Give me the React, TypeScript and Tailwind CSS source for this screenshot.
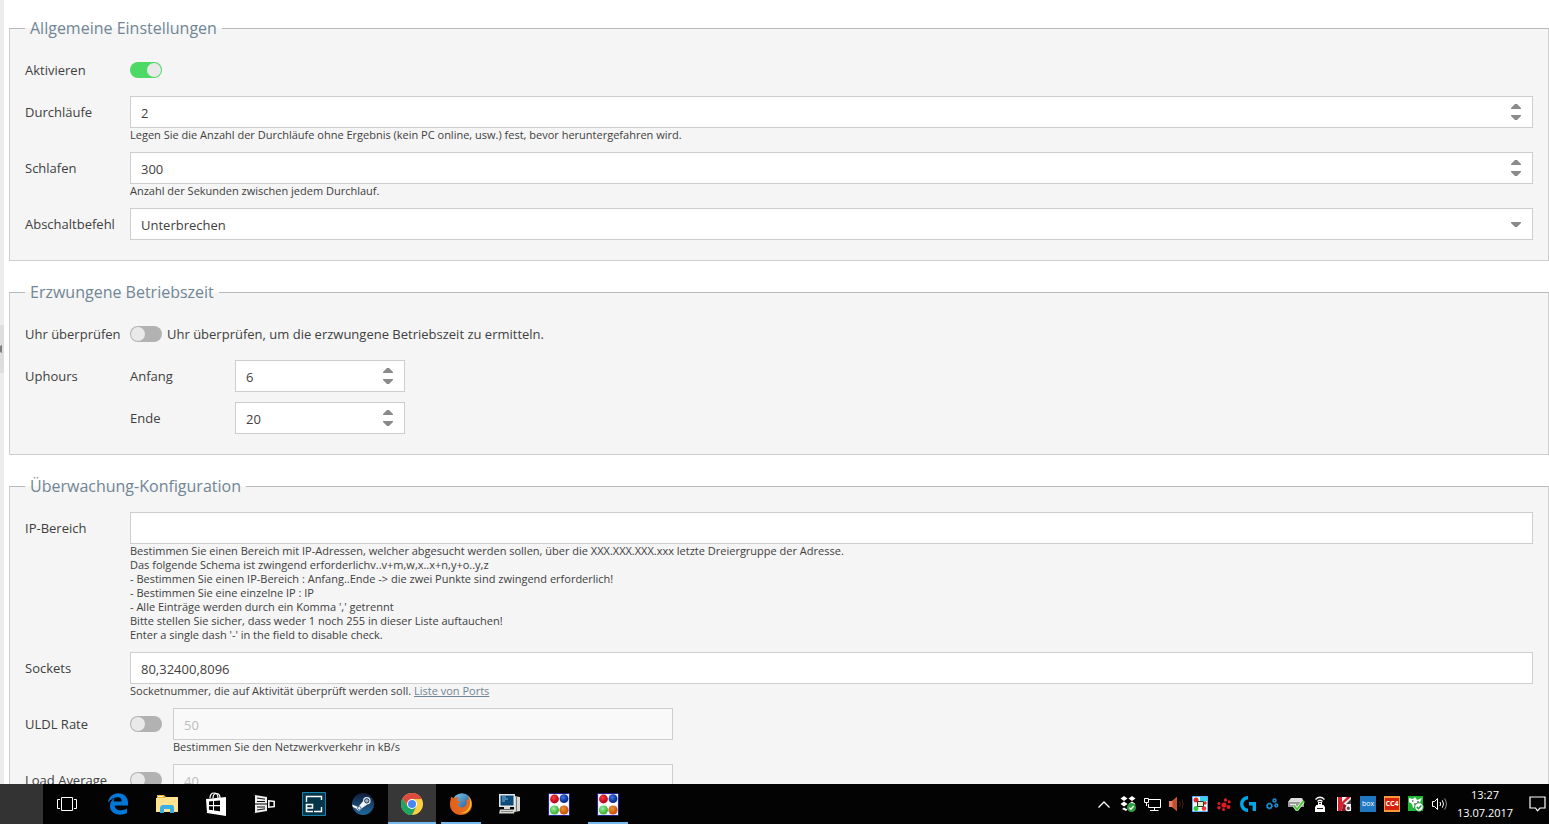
import { ReactNode, useState } from "react";

function classNames(...classes: any) {
    return classes.filter(Boolean).join(" ");
}

const UpArrow = () => (
    <svg width="10" height="5" viewBox="0 0 10 5" fill="#8a8a8a">
        <path d="M4 0h2l4 4v1H0V4z" />
    </svg>
);

const DownArrow = () => (
    <svg width="10" height="5" viewBox="0 0 10 5" fill="#8a8a8a">
        <path d="M0 0h10v1L6 5H4L0 1z" />
    </svg>
);

const Section = ({ title, children }: { title: string; children: ReactNode }) => (
    <fieldset className="min-w-0 border border-[#cecece] border-t-[#b9b9b9] bg-[#f5f5f5] px-[15px] pb-5">
        <legend className="px-[5px] text-base leading-[22px] text-[#708696]">{title}</legend>
        <div className="flex flex-col gap-2.5 pt-[15px]">{children}</div>
    </fieldset>
);

const Row = ({ label, htmlFor, children }: { label: string; htmlFor?: string; children: ReactNode }) => (
    <div className="flex items-start">
        <label htmlFor={htmlFor} className="w-[105px] shrink-0 leading-8 whitespace-nowrap">
            {label}
        </label>
        <div className="min-w-0 flex-1">{children}</div>
    </div>
);

const Help = ({ children }: { children: ReactNode }) => (
    <p className="text-[11px] leading-[14px]">{children}</p>
);

const Toggle = ({ id, defaultChecked }: { id: string; defaultChecked?: boolean }) => (
    <input
        type="checkbox"
        id={id}
        defaultChecked={defaultChecked}
        className="flex h-4 w-8 shrink-0 appearance-none items-center rounded-full bg-[#b2b2b2] px-px before:size-3.5 before:rounded-full before:bg-[#e9e9e9] checked:justify-end checked:bg-[#4cd964]"
    />
);

const TextField = ({ id, defaultValue, disabled }: { id: string; defaultValue?: string; disabled?: boolean }) => (
    <input
        type="text"
        id={id}
        defaultValue={defaultValue}
        disabled={disabled}
        className="block h-8 w-full border border-[#cecece] bg-white px-2.5 pt-0.5 disabled:bg-[#f9f9f9] disabled:text-[#bcbcbc]"
    />
);

const NumberField = ({ id, initial }: { id: string; initial: number }) => {
    const [value, setValue] = useState(initial);

    return (
        <div className="flex h-8 w-full border border-[#cecece] bg-white">
            <input
                type="number"
                id={id}
                value={value}
                onChange={(e) => setValue(Number(e.target.value))}
                className="min-w-0 flex-1 appearance-none px-2.5 pt-[3px] [-moz-appearance:textfield] [&::-webkit-inner-spin-button]:appearance-none"
            />
            <div className="flex w-8 flex-col items-center justify-center gap-1.5">
                <button type="button" aria-label="Mehr" onClick={() => setValue(value + 1)}>
                    <UpArrow />
                </button>
                <button type="button" aria-label="Weniger" onClick={() => setValue(value - 1)}>
                    <DownArrow />
                </button>
            </div>
        </div>
    );
};

/* ---------- taskbar icons ---------- */

const TaskView = () => (
    <svg width="20" height="16" viewBox="0 0 20 16" fill="none" stroke="#fff">
        <path d="M4.500 1.500h11v13h-11zM3 3.500H.5v9H3M17 3.500h2.500v9H17" />
    </svg>
);

const Edge = () => (
    <svg width="20" height="22" viewBox="0 0 20 22" fill="#0078d7">
        <path d="M0 9.800C.8 3.800 4.800.3 10.300.3c6 0 9.700 4 9.700 9.800v2.300H6.700c.2 3.300 3 4.800 6.300 4.800 2.200 0 4.200-.6 6-1.700v4.600c-2 1.100-4.300 1.600-7 1.600-6 0-10-3.300-10-8.700 0-3.400 1.700-6.200 4.600-7.700-.5.800-1 1.900-1 3.200h8.200c0-2.700-1.400-4.200-4.300-4.200C5.800 4.300 2.300 6.400 0 9.800z" />
    </svg>
);

const Explorer = () => (
    <svg width="22" height="18" viewBox="0 0 22 18">
        <path d="M1 0h7l2 2h11v4H1z" fill="#f0b429" />
        <path d="M2 1h5v1H2z" fill="#fff" />
        <path d="M0 3h9l1-1h12v15H0z" fill="#ffe391" />
        <path d="M4 18v-6l2-2h11l1 2v6h-4v-4H8v4z" fill="#35b1e5" />
    </svg>
);

const Store = () => (
    <svg width="22" height="24" viewBox="0 0 22 24">
        <path d="M5 6c0-3 1.500-5 4-5s4 2 4 5M8 6c0-3 1.500-4.500 3.500-4.500S15 3 15 6" fill="none" stroke="#fff" strokeWidth="1.200" />
        <path d="M1 7l20-2v19L2 21z" fill="#fff" />
        <path d="M4 9.500l4-.4v4H4zM9 9l6-.6v4.700H9zM4 14.200h4v4l-4-.5zM9 14.200h6v5l-6-.8z" fill="#000" />
    </svg>
);

const Remote = () => (
    <svg width="20" height="18" viewBox="0 0 20 18">
        <path d="M0 0l12 2v6.500H0zM0 9.500h12V16L0 18z" fill="#eee" />
        <path d="M2 3l8 1.200M2 6.500h8M2 12h8M2 15l8-1.200" stroke="#111" strokeWidth="1" />
        <path d="M13.800 5.800l5.400.7v5l-5.400.7z" fill="#000" stroke="#eee" strokeWidth="1.600" />
    </svg>
);

const Elaborate = () => (
    <svg width="24" height="24" viewBox="0 0 24 24" fill="none">
        <path d="M.5.500h23v23H.5z" fill="#053549" stroke="#1583ad" />
        <path d="M4.500 10V4.500h15V8M12 19.500h7.500V15" stroke="#fff" strokeWidth="1.400" />
        <path d="M11 19.500H4.500v-7h6v3.500H5" stroke="#fff" strokeWidth="1.600" />
    </svg>
);

const Steam = () => (
    <svg width="22" height="22" viewBox="0 0 22 22">
        <defs>
            <linearGradient id="steam" x1="0" y1="0" x2="0" y2="1">
                <stop offset="0" stopColor="#101c3c" />
                <stop offset="1" stopColor="#1f6a9e" />
            </linearGradient>
        </defs>
        <circle cx="11" cy="11" r="11" fill="url(#steam)" />
        <path d="M.2 11.500l6 2.500 5-6 4 3.500-5.700 4c-.5 2.500-4 3-5 .3L.8 14z" fill="#f4f4f4" />
        <circle cx="14.800" cy="7.800" r="3.800" fill="#f0f0f0" />
        <circle cx="14.800" cy="7.800" r="2.200" fill="#aab3bb" stroke="#1c3657" />
        <circle cx="7.300" cy="15.200" r="1.700" fill="none" stroke="#2a5a85" strokeWidth=".8" />
    </svg>
);

const Chrome = () => (
    <svg width="22" height="22" viewBox="0 0 22 22">
        <circle cx="11" cy="11" r="11" fill="#ffcd40" />
        <path d="M1.470 5.500A11 11 0 0 1 20.530 5.500L20.800 6H11L6.670 13.500z" fill="#dd4b3e" />
        <path d="M1.470 5.500A11 11 0 0 0 11 22l4.330-8.500H6.670z" fill="#1fa463" />
        <circle cx="11" cy="11" r="5" fill="#fff" />
        <circle cx="11" cy="11" r="4" fill="#4587f3" />
    </svg>
);

const Firefox = () => (
    <svg width="22" height="22" viewBox="0 0 22 22">
        <defs>
            <linearGradient id="globe" x1="0" y1="0" x2="1" y2="1">
                <stop offset="0" stopColor="#7fd0f0" />
                <stop offset="1" stopColor="#123f86" />
            </linearGradient>
            <linearGradient id="fox" x1="0" y1="0" x2="1" y2="0">
                <stop offset="0" stopColor="#e3601b" />
                <stop offset="1" stopColor="#e8701a" />
            </linearGradient>
        </defs>
        <circle cx="12" cy="10" r="9.800" fill="url(#globe)" />
        <path d="M1.500 3.500l2 2C5 4.200 6.500 4 8.500 4.500L7 7.500l4 1.200-3.200 2.300c.5 3.200 3.700 4.200 6.200 3 2.500-1.300 3.500-4 2.500-7.500C19 8 19 5 18 3c3 2.500 4 5.500 4 8.500C22 17.500 17 22 11 22S0 17.500 0 11.500c0-3 .5-5.500 1.500-8z" fill="url(#fox)" />
        <path d="M18.500 3.500c2 3 2.300 7.500.5 11-2 3.500-5 5.300-8.500 5.500C17 21 21.300 16.500 21.300 11c0-2.500-1-5.500-2.800-7.500z" fill="#fbc531" />
    </svg>
);

const Computer = () => (
    <svg width="22" height="20" viewBox="0 0 22 20">
        <path d="M15 2l6 1v14l-6 1z" fill="#d6d6d2" />
        <path d="M17.500 2.500v15" stroke="#777" />
        <path d="M0 0h16v13H0z" fill="#e6e6e2" />
        <path d="M1.500 1.500h13v10h-13z" fill="#0d4b7c" />
        <path d="M3 3h4M3 5h6M3 7h3" stroke="#79b9e3" />
        <path d="M5 13h6v2H5zM1 15.500h15l-1 4H0z" fill="#d8d8d3" />
        <path d="M2 17.500h12" stroke="#8a8a86" />
    </svg>
);

const Balls = () => (
    <svg width="22" height="23" viewBox="0 0 22 23">
        <defs>
            <radialGradient id="red" cx=".4" cy=".35">
                <stop offset="0" stopColor="#ff3a3a" />
                <stop offset="1" stopColor="#bd0a1e" />
            </radialGradient>
            <radialGradient id="blue" cx=".4" cy=".35">
                <stop offset="0" stopColor="#3f78e8" />
                <stop offset="1" stopColor="#0c2f92" />
            </radialGradient>
            <radialGradient id="green" cx=".4" cy=".35">
                <stop offset="0" stopColor="#9af09a" />
                <stop offset="1" stopColor="#45b845" />
            </radialGradient>
            <radialGradient id="orange" cx=".4" cy=".35">
                <stop offset="0" stopColor="#e8903c" />
                <stop offset="1" stopColor="#cc5c12" />
            </radialGradient>
        </defs>
        <rect x=".5" y=".5" width="21" height="22" rx="1" fill="#e9e9f8" stroke="#20208c" />
        <path d="M10 2h2v19h-2zM2 10h18v3H2z" fill="#fff" />
        <circle cx="6.500" cy="6" r="4.400" fill="url(#red)" />
        <circle cx="16" cy="5.700" r="4.400" fill="url(#blue)" />
        <circle cx="6.500" cy="17" r="4.600" fill="url(#green)" />
        <circle cx="16" cy="17" r="4.600" fill="url(#orange)" />
    </svg>
);

/* ---------- tray icons ---------- */

const Chevron = () => (
    <svg width="12" height="7" viewBox="0 0 12 7" fill="none" stroke="#fff" strokeWidth="1.300">
        <path d="M.5 6.500L6 1l5.500 5.500" />
    </svg>
);

const Dropbox = () => (
    <svg width="16" height="16" viewBox="0 0 16 16">
        <path d="M4 0l3.500 2.500L4 5 .5 2.500zM12 0l3.500 2.500L12 5 8.500 2.500zM4 5.500L7.500 8 4 10.500.5 8zM12 5.500L15.500 8 12 10.500 8.500 8zM4 11.500l3.500 2L6 15l-4-2z" fill="#fff" />
        <circle cx="11.500" cy="11.500" r="4.500" fill="#2c9e3c" />
        <path d="M9.300 11.600l1.600 1.600 2.800-3.200" fill="none" stroke="#fff" strokeWidth="1.300" />
    </svg>
);

const Network = () => (
    <svg width="17" height="15" viewBox="0 0 17 15" fill="none" stroke="#fff">
        <path d="M5 2.500h11.500v8h-12V7M10.500 10.500v3M6 13.500h8.500M.5 1.500h4v4h-4zM2.500 5.500V9" />
    </svg>
);

const RedSpeaker = () => (
    <svg width="15" height="14" viewBox="0 0 15 14">
        <path d="M0 4h3l5-4v14l-5-4H0z" fill="#e9805f" />
        <path d="M3.500 4L8 0v14l-4.500-4z" fill="#c4502f" />
        <path d="M10.500 4q1.500 3 0 6M13 2.500q2 4.500 0 9" fill="none" stroke="#4a2015" />
    </svg>
);

const ColorGrid = () => (
    <svg width="16" height="16" viewBox="0 0 16 16">
        <path d="M.5.500h15v15H.5z" fill="#f4fbff" stroke="#5db0ff" />
        <path d="M8 1h7v4H8z" fill="#33d6ee" />
        <circle cx="4" cy="4" r="2.500" fill="#e32626" />
        <circle cx="13" cy="7" r="1.700" fill="#e32626" />
        <circle cx="4" cy="12.500" r="2.500" fill="#35c935" />
        <circle cx="12" cy="12.500" r="2.300" fill="#ee3b2b" />
        <path d="M5.500 5.500h6v5h-6z" fill="#dff0c8" stroke="#333" />
    </svg>
);

const RedDots = () => (
    <svg width="14" height="13" viewBox="0 0 14 13" fill="#e01b24">
        <circle cx="7" cy="7" r="2.600" />
        <circle cx="8.500" cy="2" r="1.700" />
        <circle cx="12.200" cy="3.800" r="1.500" />
        <circle cx="2" cy="5.500" r="1.500" />
        <circle cx="2" cy="9.800" r="1.800" />
        <circle cx="6.500" cy="11.500" r="1.500" />
        <circle cx="11.500" cy="9" r="1.900" />
    </svg>
);

const Logitech = () => (
    <svg width="16" height="16" viewBox="0 0 16 16" fill="#00a8e8">
        <path d="M8 0v3.400a4.600 4.600 0 0 0 0 9.200V16A8 8 0 0 1 8 0zM9 6h7v9h-3.400V9.400H9z" />
    </svg>
);

const Gears = () => (
    <svg width="13" height="13" viewBox="0 0 13 13" fill="none" stroke="#1c8fd6">
        <circle cx="3.500" cy="8" r="2.200" strokeWidth="1.500" />
        <circle cx="3.500" cy="8" r="3.100" strokeDasharray="1.200 1.200" />
        <circle cx="8.500" cy="2.500" r="1.500" strokeWidth="1.500" />
        <circle cx="10.300" cy="7.500" r="1.400" strokeWidth="1.500" />
    </svg>
);

const Drive = () => (
    <svg width="17" height="14" viewBox="0 0 17 14">
        <path d="M3 1h11l2 4H0z" fill="#dcdcdc" />
        <path d="M0 5h16v5H0z" fill="#9b9b9b" />
        <path d="M2 7.500h6" stroke="#eee" />
        <path d="M6 8.500l3 4L15.500 4" fill="none" stroke="#e4f8dc" strokeWidth="3.400" />
        <path d="M6 8.500l3 4L15.500 4" fill="none" stroke="#4fc23c" strokeWidth="2" />
    </svg>
);

const WifiUsb = () => (
    <svg width="12" height="16" viewBox="0 0 12 16">
        <path d="M1.500 3.500Q6-1 10.500 3.500M3.500 5.500Q6 3 8.500 5.500" fill="none" stroke="#fff" strokeWidth="1.200" />
        <path d="M4 6h4v3h2v1l1 1v5H1v-5l1-1V9h2z" fill="#fff" />
        <path d="M5 7.500h2M3 12.500h6" stroke="#222" />
    </svg>
);

const Kaspersky = () => (
    <svg width="15" height="15" viewBox="0 0 15 15">
        <path d="M0 0h14v14H0z" fill="#f2f2f2" />
        <path d="M1 0h4v5l5-5h4L6.500 6.500 4.500 14H1z" fill="#d3222f" />
        <path d="M6.500 6.500L10 9v5H4.500z" fill="#8f1a22" />
        <path d="M9 7l5-5v5z" fill="#444" />
        <circle cx="11.300" cy="11.300" r="2.300" fill="#555" stroke="#fff" strokeWidth="1.200" />
    </svg>
);

const Box = () => (
    <span className="flex size-4 items-center justify-center bg-[#1f78c1] text-[7px] leading-4 text-white">box</span>
);

const Cc4 = () => (
    <span className="flex size-4 items-center justify-center border border-y-2 border-[#f59a3c] bg-[#d8200f] text-[7px] leading-3 font-bold text-white">CC4</span>
);

const GreenSync = () => (
    <svg width="16" height="16" viewBox="0 0 16 16">
        <path d="M0 0h15v15H0z" fill="#21b534" />
        <path d="M1 2l4 1 2-2 2 3 5-2-2 4 2 2-5 1-4 3-1-4-3-2z" fill="#fff" />
        <path d="M4 5h1.500M9 6h2M6 8h2" stroke="#222" />
        <circle cx="11" cy="11" r="4.300" fill="#fff" stroke="#1c9b3c" />
        <path d="M8.800 11l1.700 1.800 2.800-3.300" fill="none" stroke="#1c9b3c" strokeWidth="1.400" />
    </svg>
);

const Speaker = () => (
    <svg width="16" height="14" viewBox="0 0 16 14" fill="none" stroke="#fff">
        <path d="M.5 4.500h2l3-3v11l-3-3h-2zM8 5q1.200 2 0 4M10.300 3.300q2.400 3.700 0 7.400" />
        <path d="M12.600 1.500q3.600 5.500 0 11" stroke="#999" />
    </svg>
);

const Notifications = () => (
    <svg width="17" height="16" viewBox="0 0 17 16" fill="none" stroke="#fff" strokeWidth="1.200">
        <path d="M1 1h15v11h-5l-2.500 2.800L6.500 12H1z" />
    </svg>
);

const apps = [
    { name: "Edge", icon: <Edge /> },
    { name: "Explorer", icon: <Explorer /> },
    { name: "Store", icon: <Store /> },
    { name: "Remote", icon: <Remote /> },
    { name: "Editor", icon: <Elaborate /> },
    { name: "Steam", icon: <Steam /> },
    { name: "Chrome", icon: <Chrome />, active: true },
    { name: "Firefox", icon: <Firefox />, running: true },
    { name: "Computer", icon: <Computer /> },
    { name: "Homematic", icon: <Balls /> },
    { name: "Homematic 2", icon: <Balls />, running: true },
];

const tray = [
    { name: "Ausgeblendete Symbole", icon: <Chevron /> },
    { name: "Dropbox", icon: <Dropbox /> },
    { name: "Netzwerk", icon: <Network /> },
    { name: "Audio", icon: <RedSpeaker /> },
    { name: "Farben", icon: <ColorGrid /> },
    { name: "Server", icon: <RedDots /> },
    { name: "Logitech", icon: <Logitech /> },
    { name: "Dienste", icon: <Gears /> },
    { name: "Hardware sicher entfernen", icon: <Drive /> },
    { name: "WLAN", icon: <WifiUsb /> },
    { name: "Kaspersky", icon: <Kaspersky /> },
    { name: "Box", icon: <Box /> },
    { name: "CC4", icon: <Cc4 /> },
    { name: "Synchronisierung", icon: <GreenSync /> },
    { name: "Lautsprecher", icon: <Speaker /> },
];

const Taskbar = () => (
    <footer className="flex h-10 shrink-0 bg-[#030303] text-white">
        <button type="button" aria-label="Start" className="w-[43px] bg-[#333333]" />
        <button type="button" aria-label="Taskansicht" className="flex w-12 items-center justify-center">
            <TaskView />
        </button>
        <div className="ml-[3px] flex gap-px">
            {apps.map((app) => (
                <button
                    key={app.name}
                    type="button"
                    aria-label={app.name}
                    className={classNames(
                        "flex w-12 flex-col items-center",
                        app.active && "bg-[#373737]"
                    )}
                >
                    <span className="flex w-full flex-1 items-center justify-center pt-0.5">{app.icon}</span>
                    <span
                        className={classNames(
                            "h-0.5",
                            app.active && "w-full bg-[#76b9ed]",
                            app.running && "w-10 bg-[#76b9ed]"
                        )}
                    />
                </button>
            ))}
        </div>
        <div className="ml-auto flex">
            {tray.map((item) => (
                <button key={item.name} type="button" aria-label={item.name} className="flex w-6 items-center justify-center">
                    {item.icon}
                </button>
            ))}
        </div>
        <div className="flex w-[66px] flex-col justify-center text-center text-[11px] leading-[18px]">
            <time>13:27</time>
            <time>13.07.2017</time>
        </div>
        <button type="button" aria-label="Info-Center" className="ml-2 flex w-[23px] items-center justify-center">
            <Notifications />
        </button>
    </footer>
);

const App = () => {
    return (
        <div className="flex h-screen flex-col bg-white font-['Open_Sans','Noto_Sans',sans-serif] text-[13px] text-[#404040]">
            <div className="flex min-h-0 flex-1">
                <div className="flex w-1 shrink-0 flex-col justify-center bg-[#ececec]">
                    <button type="button" aria-label="Menü einblenden" className="mt-[-86px] flex h-12 items-center bg-[#dedede]">
                        <svg width="3" height="8" viewBox="0 0 3 8" fill="#808080">
                            <path d="M0 1l2-1v8L0 7z" />
                        </svg>
                    </button>
                </div>
                <form className="flex min-w-0 flex-1 flex-col gap-5 overflow-x-hidden overflow-y-auto pt-[17px] pl-[5px] [scrollbar-width:none]">
                    <Section title="Allgemeine Einstellungen">
                        <Row label="Aktivieren" htmlFor="enable">
                            <div className="flex h-8 items-center">
                                <Toggle id="enable" defaultChecked />
                            </div>
                        </Row>
                        <Row label="Durchläufe" htmlFor="cycles">
                            <NumberField id="cycles" initial={2} />
                            <Help>Legen Sie die Anzahl der Durchläufe ohne Ergebnis (kein PC online, usw.) fest, bevor heruntergefahren wird.</Help>
                        </Row>
                        <Row label="Schlafen" htmlFor="sleep">
                            <NumberField id="sleep" initial={300} />
                            <Help>Anzahl der Sekunden zwischen jedem Durchlauf.</Help>
                        </Row>
                        <Row label="Abschaltbefehl" htmlFor="command">
                            <div className="relative">
                                <select id="command" className="block h-8 w-full appearance-none border border-[#cecece] bg-white px-2.5 pt-[3px]">
                                    <option>Unterbrechen</option>
                                </select>
                                <span className="pointer-events-none absolute inset-y-0 right-3 flex items-center">
                                    <DownArrow />
                                </span>
                            </div>
                        </Row>
                    </Section>

                    <Section title="Erzwungene Betriebszeit">
                        <Row label="Uhr überprüfen" htmlFor="clockcheck">
                            <div className="flex h-8 items-center gap-[5px]">
                                <Toggle id="clockcheck" />
                                <label htmlFor="clockcheck" className="leading-8">
                                    Uhr überprüfen, um die erzwungene Betriebszeit zu ermitteln.
                                </label>
                            </div>
                        </Row>
                        <div className="flex">
                            <span className="w-[105px] shrink-0 leading-8">Uphours</span>
                            <div className="flex flex-col gap-2.5">
                                <Row label="Anfang" htmlFor="begin">
                                    <div className="w-[170px]">
                                        <NumberField id="begin" initial={6} />
                                    </div>
                                </Row>
                                <Row label="Ende" htmlFor="end">
                                    <div className="w-[170px]">
                                        <NumberField id="end" initial={20} />
                                    </div>
                                </Row>
                            </div>
                        </div>
                    </Section>

                    <Section title="Überwachung-Konfiguration">
                        <Row label="IP-Bereich" htmlFor="range">
                            <TextField id="range" />
                            <Help>
                                Bestimmen Sie einen Bereich mit IP-Adressen, welcher abgesucht werden sollen, über die XXX.XXX.XXX.xxx letzte Dreiergruppe der Adresse.
                                <br />
                                Das folgende Schema ist zwingend erforderlichv..v+m,w,x..x+n,y+o..y,z
                                <br />
                                - Bestimmen Sie einen IP-Bereich : Anfang..Ende -&gt; die zwei Punkte sind zwingend erforderlich!
                                <br />
                                - Bestimmen Sie eine einzelne IP : IP
                                <br />
                                - Alle Einträge werden durch ein Komma ',' getrennt
                                <br />
                                Bitte stellen Sie sicher, dass weder 1 noch 255 in dieser Liste auftauchen!
                                <br />
                                Enter a single dash '-' in the field to disable check.
                            </Help>
                        </Row>
                        <Row label="Sockets" htmlFor="sockets">
                            <TextField id="sockets" defaultValue="80,32400,8096" />
                            <Help>
                                Socketnummer, die auf Aktivität überprüft werden soll.{" "}
                                <a href="#" className="text-[#708696] underline">
                                    Liste von Ports
                                </a>
                            </Help>
                        </Row>
                        <Row label="ULDL Rate" htmlFor="uldlcheck">
                            <div className="flex gap-[11px]">
                                <div className="flex h-8 items-center">
                                    <Toggle id="uldlcheck" />
                                </div>
                                <div className="w-[500px]">
                                    <TextField id="uldlrate" defaultValue="50" disabled />
                                    <Help>Bestimmen Sie den Netzwerkverkehr in kB/s</Help>
                                </div>
                            </div>
                        </Row>
                        <Row label="Load Average" htmlFor="loadcheck">
                            <div className="flex gap-[11px]">
                                <div className="flex h-8 items-center">
                                    <Toggle id="loadcheck" />
                                </div>
                                <div className="w-[500px]">
                                    <TextField id="loadaverage" defaultValue="40" disabled />
                                </div>
                            </div>
                        </Row>
                    </Section>
                </form>
            </div>
            <Taskbar />
        </div>
    );
};

export default App;
